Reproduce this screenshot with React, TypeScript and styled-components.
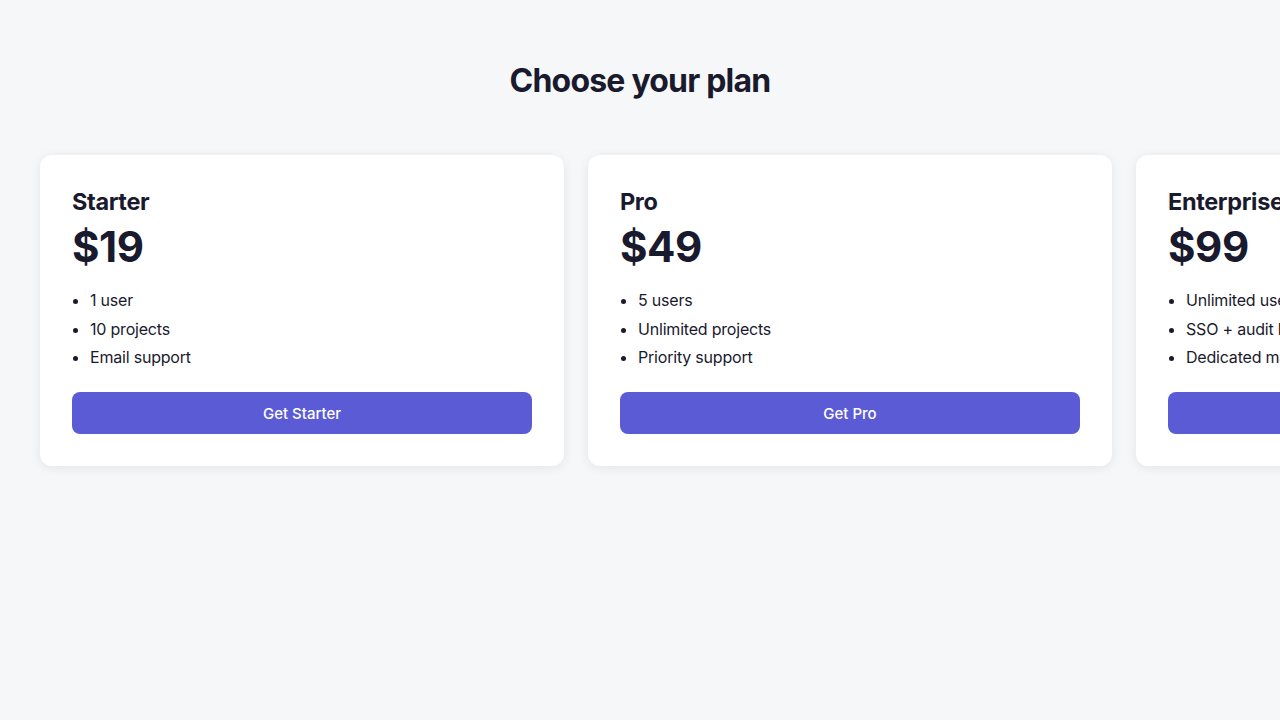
import React from "react";
import styled, { createGlobalStyle } from "styled-components";

const GlobalStyle = createGlobalStyle`
  html, body {
    margin: 0;
    padding: 0;
    background: #f6f7f9;
    overflow: hidden;
  }
  body {
    font-family: Inter, "Noto Sans", sans-serif;
    color: #1a1a2e;
  }
`;

const Page = styled.main`
  display: flex;
  flex-flow: column nowrap;
  padding: 61px 40px 40px;
  min-height: 720px;
  box-sizing: border-box;
`;

const Heading = styled.h1`
  margin: 0 0 54px;
  font-size: 32px;
  line-height: 40px;
  font-weight: 700;
  text-align: center;
  letter-spacing: -0.025em;
`;

const CardRow = styled.div`
  display: flex;
  flex-flow: row nowrap;
  gap: 24px;
`;

const Card = styled.section`
  flex: 0 0 524px;
  box-sizing: border-box;
  background: #ffffff;
  border-radius: 12px;
  padding: 32px;
  box-shadow: 0 2px 12px rgba(20, 20, 50, 0.08);
`;

const PlanName = styled.h2`
  margin: 0;
  font-size: 23.5px;
  line-height: 30px;
  font-weight: 700;
  letter-spacing: -0.015em;
`;

const Price = styled.div`
  margin-top: 2px;
  font-size: 42px;
  line-height: 56px;
  font-weight: 700;
  letter-spacing: -0.01em;
`;

const Features = styled.ul`
  margin: 11px 0 0;
  padding-left: 18px;
  font-size: 16px;
  line-height: 28.5px;
  letter-spacing: -0.2px;
`;

const CtaButton = styled.button`
  display: block;
  width: 100%;
  height: 42px;
  margin-top: 20.5px;
  border: 0;
  border-radius: 8px;
  background: #5b5bd6;
  color: #ffffff;
  font-family: inherit;
  font-size: 15px;
  font-weight: 500;
  cursor: pointer;
`;

type Plan = { name: string; price: string; features: string[] };

const plans: Plan[] = [
  { name: "Starter", price: "$19", features: ["1 user", "10 projects", "Email support"] },
  { name: "Pro", price: "$49", features: ["5 users", "Unlimited projects", "Priority support"] },
  {
    name: "Enterprise",
    price: "$99",
    features: ["Unlimited users", "SSO + audit logs", "Dedicated manager"],
  },
];

const App: React.FC = () => (
  <>
    <GlobalStyle />
    <Page>
      <Heading>Choose your plan</Heading>
      <CardRow>
        {plans.map((plan) => (
          <Card key={plan.name}>
            <PlanName>{plan.name}</PlanName>
            <Price>{plan.price}</Price>
            <Features>
              {plan.features.map((f) => (
                <li key={f}>{f}</li>
              ))}
            </Features>
            <CtaButton>Get {plan.name}</CtaButton>
          </Card>
        ))}
      </CardRow>
    </Page>
  </>
);

export default App;
